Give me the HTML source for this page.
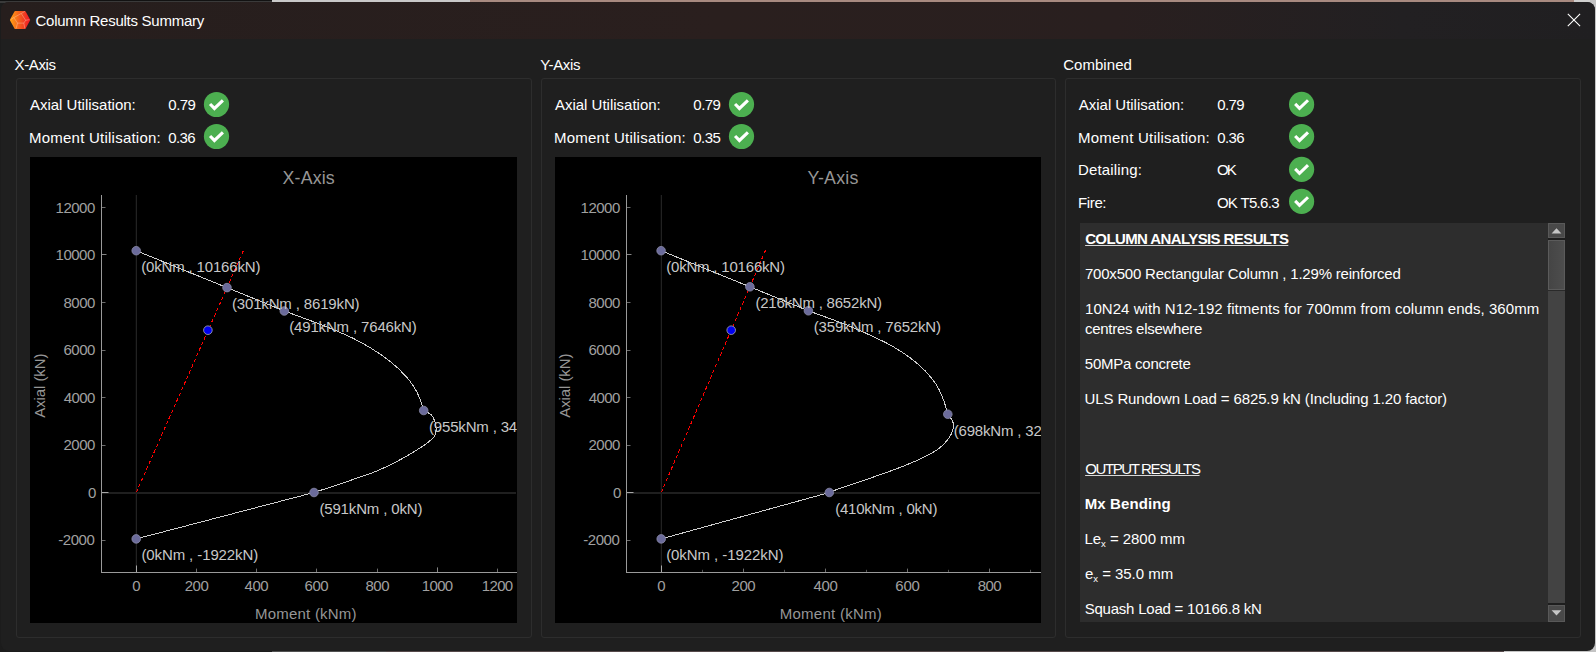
<!DOCTYPE html>
<html lang="en"><head><meta charset="utf-8"><title>Column Results Summary</title>
<style>
html,body{margin:0;padding:0}
body{width:1596px;height:652px;position:relative;overflow:hidden;background:#1c1c1c;font-family:"Liberation Sans", sans-serif;font-size:15px;color:#fff}
.bg{position:absolute}
#win{position:absolute;left:1px;top:2px;width:1594px;height:649px;border-radius:8px;background:#1f1f1f;overflow:hidden}
#tb{position:absolute;left:0;top:0;width:1594px;height:37px;background:linear-gradient(90deg,#261e1d 0%,#2a1f1e 45%,#291f1f 70%,#222022 88%,#201f21 100%)}
.t{position:absolute;white-space:pre;line-height:20px;height:20px}
.gb{position:absolute;border:1px solid #2d2d2d;border-radius:3px;box-sizing:border-box}
.plot{position:absolute;display:block}
.plot text{font-family:"Liberation Sans", sans-serif;font-size:15px}
.tk{fill:#a0a0a0}
.al{fill:#969696}
.plot text.ti{fill:#969696;font-size:17.8px}
.lb{fill:#c8c8c8}
.ck{position:absolute;display:block}
#ta{position:absolute;left:1080px;top:223px;width:485px;height:399px;background:#2d2d2d;overflow:hidden}
.b{font-weight:bold}
.u{text-decoration:underline;text-decoration-thickness:1px;text-underline-offset:1px;text-decoration-color:#d8d8d8}
sub{font-size:9.5px;vertical-align:baseline;position:relative;top:3px;line-height:0}
</style></head><body>

<div class="bg" style="left:0;top:0;width:272px;height:1px;background:#121212"></div>
<div class="bg" style="left:0;top:1px;width:272px;height:2px;background:#3a3a3a"></div>
<div class="bg" style="left:272px;top:0;width:198px;height:3px;background:#c9c9c9"></div>
<div class="bg" style="left:470px;top:0;width:1104px;height:3px;background:#a88a80"></div>
<div class="bg" style="left:1574px;top:0;width:22px;height:12px;background:#cfcfcf"></div>
<div class="bg" style="left:1590px;top:0;width:6px;height:652px;background:#c4c4c4"></div>
<div class="bg" style="left:272px;top:649px;width:114px;height:3px;background:#505050"></div>
<div class="bg" style="left:386px;top:649px;width:1118px;height:3px;background:#55494a"></div>
<div class="bg" style="left:1504px;top:640px;width:92px;height:12px;background:#c4c4c4"></div>
<div id="win"><div id="tb"></div></div>
<svg class="ck" style="left:8px;top:8px" width="24" height="24" viewBox="0 0 24 24">
<defs><linearGradient id="ig" x1="0" y1="0" x2="1" y2="0"><stop offset="0" stop-color="#ff9a14"/><stop offset="0.45" stop-color="#f4601e"/><stop offset="1" stop-color="#ee1c25"/></linearGradient></defs>
<path d="M2.9 12 L7.3 3.85 L16.8 3.85 L21.2 12 L16.8 20.15 L7.3 20.15 Z" fill="url(#ig)" stroke="url(#ig)" stroke-width="1.9" stroke-linejoin="round"/>
<path d="M5.8 9.6 L13.2 5.5 L17.6 12.3 L15.8 15.1 L9.5 15.1 Z M9.5 15.1 L8.2 20.4 M15.8 15.1 L16.8 20.4 M5.8 9.6 L2.6 11.6 M13.2 5.5 L16.9 3.4 M17.6 12.3 L21.4 11.6" fill="none" stroke="#ffe0cc" stroke-opacity="0.5" stroke-width="0.7"/>
</svg>
<svg class="ck" style="left:1567px;top:13px" width="14" height="14" viewBox="0 0 14 14"><path d="M0.8 0.9 L13.1 13.2 M13.1 0.9 L0.8 13.2" stroke="#fff" stroke-width="1.1" fill="none"/></svg>
<div class="gb" style="left:16px;top:78px;width:516px;height:560px"></div>
<div class="gb" style="left:541px;top:78px;width:515px;height:560px"></div>
<div class="gb" style="left:1065px;top:78px;width:516px;height:560px"></div>
<span class="t " style="left:35.52px;top:11.0px;letter-spacing:-0.264px">Column Results Summary</span>
<span class="t " style="left:14.59px;top:55.0px;letter-spacing:-0.397px">X-Axis</span>
<span class="t " style="left:540.14px;top:55.0px;letter-spacing:-0.306px">Y-Axis</span>
<span class="t " style="left:1063.14px;top:55.0px;letter-spacing:0.054px">Combined</span>
<span class="t " style="left:29.91px;top:95.0px;letter-spacing:-0.001px">Axial Utilisation:</span>
<span class="t " style="left:29.00px;top:128.0px;letter-spacing:0.233px">Moment Utilisation:</span>
<span class="t " style="left:554.91px;top:95.0px;letter-spacing:-0.001px">Axial Utilisation:</span>
<span class="t " style="left:554.00px;top:128.0px;letter-spacing:0.233px">Moment Utilisation:</span>
<span class="t " style="left:168.36px;top:95.0px;letter-spacing:-0.549px">0.79</span>
<span class="t " style="left:168.36px;top:128.0px;letter-spacing:-0.633px">0.36</span>
<span class="t " style="left:693.36px;top:95.0px;letter-spacing:-0.549px">0.79</span>
<span class="t " style="left:693.36px;top:128.0px;letter-spacing:-0.591px">0.35</span>
<svg class="ck" style="left:202px;top:90px" width="28" height="28" viewBox="0 0 28 28"><circle cx="14.50" cy="14.50" r="12.6" fill="#4caf50"/><path d="M8.05 14.00 L12.40 18.45 L20.90 10.35" fill="none" stroke="#fff" stroke-width="3.1"/></svg>
<svg class="ck" style="left:202px;top:122px" width="28" height="28" viewBox="0 0 28 28"><circle cx="14.50" cy="14.50" r="12.6" fill="#4caf50"/><path d="M8.05 14.00 L12.40 18.45 L20.90 10.35" fill="none" stroke="#fff" stroke-width="3.1"/></svg>
<svg class="ck" style="left:727px;top:90px" width="28" height="28" viewBox="0 0 28 28"><circle cx="14.50" cy="14.50" r="12.6" fill="#4caf50"/><path d="M8.05 14.00 L12.40 18.45 L20.90 10.35" fill="none" stroke="#fff" stroke-width="3.1"/></svg>
<svg class="ck" style="left:727px;top:122px" width="28" height="28" viewBox="0 0 28 28"><circle cx="14.50" cy="14.50" r="12.6" fill="#4caf50"/><path d="M8.05 14.00 L12.40 18.45 L20.90 10.35" fill="none" stroke="#fff" stroke-width="3.1"/></svg>
<span class="t " style="left:1078.83px;top:95.0px;letter-spacing:-0.026px">Axial Utilisation:</span>
<span class="t " style="left:1217.18px;top:95.0px;letter-spacing:-0.563px">0.79</span>
<svg class="ck" style="left:1287px;top:90px" width="28" height="28" viewBox="0 0 28 28"><circle cx="14.60" cy="14.40" r="12.6" fill="#4caf50"/><path d="M8.15 13.90 L12.50 18.35 L21.00 10.25" fill="none" stroke="#fff" stroke-width="3.1"/></svg>
<span class="t " style="left:1078.02px;top:128.0px;letter-spacing:0.229px">Moment Utilisation:</span>
<span class="t " style="left:1217.18px;top:128.0px;letter-spacing:-0.563px">0.36</span>
<svg class="ck" style="left:1287px;top:122px" width="28" height="28" viewBox="0 0 28 28"><circle cx="14.60" cy="14.50" r="12.6" fill="#4caf50"/><path d="M8.15 14.00 L12.50 18.45 L21.00 10.35" fill="none" stroke="#fff" stroke-width="3.1"/></svg>
<span class="t " style="left:1078.02px;top:160.0px;letter-spacing:0.159px">Detailing:</span>
<span class="t " style="left:1216.89px;top:160.0px;letter-spacing:-1.699px">OK</span>
<svg class="ck" style="left:1287px;top:155px" width="28" height="28" viewBox="0 0 28 28"><circle cx="14.60" cy="14.30" r="12.6" fill="#4caf50"/><path d="M8.15 13.80 L12.50 18.25 L21.00 10.15" fill="none" stroke="#fff" stroke-width="3.1"/></svg>
<span class="t " style="left:1078.02px;top:193.0px;letter-spacing:-0.373px">Fire:</span>
<span class="t " style="left:1216.89px;top:193.0px;letter-spacing:-0.676px">OK T5.6.3</span>
<svg class="ck" style="left:1287px;top:187px" width="28" height="28" viewBox="0 0 28 28"><circle cx="14.60" cy="14.40" r="12.6" fill="#4caf50"/><path d="M8.15 13.90 L12.50 18.35 L21.00 10.25" fill="none" stroke="#fff" stroke-width="3.1"/></svg>
<svg class="plot" style="left:30px;top:157px" width="487" height="466" viewBox="0 0 487 466">
<rect width="487" height="466" fill="#000"/>
<text class="tk" x="28.16" y="388.3" style="letter-spacing:-0.427px">-2000</text>
<text class="tk" x="57.97" y="340.8" style="letter-spacing:0.000px">0</text>
<text class="tk" x="33.53" y="293.3" style="letter-spacing:-0.490px">2000</text>
<text class="tk" x="33.81" y="245.8" style="letter-spacing:-0.583px">4000</text>
<text class="tk" x="33.53" y="198.3" style="letter-spacing:-0.490px">6000</text>
<text class="tk" x="33.53" y="150.8" style="letter-spacing:-0.490px">8000</text>
<text class="tk" x="25.62" y="103.3" style="letter-spacing:-0.517px">10000</text>
<text class="tk" x="25.62" y="55.8" style="letter-spacing:-0.517px">12000</text>
<text class="tk" x="102.25" y="433.6" style="letter-spacing:0.000px">0</text>
<text class="tk" x="154.64" y="433.6" style="letter-spacing:-0.416px">200</text>
<text class="tk" x="214.54" y="433.6" style="letter-spacing:-0.447px">400</text>
<text class="tk" x="274.59" y="433.6" style="letter-spacing:-0.478px">600</text>
<text class="tk" x="335.43" y="433.6" style="letter-spacing:-0.400px">800</text>
<text class="tk" x="391.81" y="433.6" style="letter-spacing:-0.654px">1000</text>
<text class="tk" x="451.80" y="433.6" style="letter-spacing:-0.675px">1200</text>
<text class="ti" x="252.58" y="26.9" style="letter-spacing:0.140px">X-Axis</text>
<text class="al" x="225.01" y="461.6" style="letter-spacing:0.218px">Moment (kNm)</text>
<text class="al" transform="translate(15.3 228.7) rotate(-90)" text-anchor="middle" style="letter-spacing:-0.08px">Axial (kN)</text>
<rect x="105.8" y="38.0" width="1" height="377.0" fill="#2b2b2b"/>
<rect x="72.0" y="335.0" width="414.0" height="2" fill="#1f1f1f"/>
<rect x="71.0" y="38.0" width="1" height="378.0" fill="#9a9a9a"/>
<rect x="71.0" y="415.0" width="416.0" height="1" fill="#9a9a9a"/>
<rect x="72.0" y="383.0" width="3.5" height="1" fill="#6c6c6c"/>
<rect x="72.0" y="335.0" width="6.5" height="1" fill="#a8a8a8"/>
<rect x="72.0" y="288.0" width="3.5" height="1" fill="#6c6c6c"/>
<rect x="72.0" y="240.0" width="3.5" height="1" fill="#6c6c6c"/>
<rect x="72.0" y="193.0" width="3.5" height="1" fill="#6c6c6c"/>
<rect x="72.0" y="145.0" width="3.5" height="1" fill="#6c6c6c"/>
<rect x="72.0" y="97.0" width="4.5" height="1" fill="#858585"/>
<rect x="72.0" y="50.0" width="3.5" height="1" fill="#6c6c6c"/>
<rect x="106.0" y="408.5" width="1" height="6.5" fill="#a8a8a8"/>
<rect x="166.0" y="411.6" width="1" height="3.4" fill="#6c6c6c"/>
<rect x="226.0" y="411.6" width="1" height="3.4" fill="#6c6c6c"/>
<rect x="286.0" y="411.6" width="1" height="3.4" fill="#6c6c6c"/>
<rect x="347.0" y="411.6" width="1" height="3.4" fill="#6c6c6c"/>
<rect x="407.0" y="410.4" width="1" height="4.6" fill="#858585"/>
<rect x="467.0" y="411.6" width="1" height="3.4" fill="#6c6c6c"/>
<line x1="106.3" y1="335.4" x2="213.7" y2="93.0" stroke="#f00" stroke-width="1" stroke-dasharray="3.6 2.6" shape-rendering="crispEdges"/>
<path d="M106.2 93.7 L197.0 130.6 L254.3 154.0 L254.3 154.0 C259.7 156.0 278.3 162.8 286.8 166.0 C295.3 169.2 299.1 170.8 305.2 173.4 C311.3 176.0 317.5 178.5 323.6 181.6 C329.7 184.7 335.9 188.0 342.0 191.8 C348.1 195.6 354.9 200.2 360.4 204.6 C365.9 209.0 371.1 214.1 375.1 218.4 C379.1 222.7 381.9 226.6 384.3 230.4 C386.8 234.2 388.2 237.5 389.8 241.4 C391.4 245.2 393.1 251.5 393.7 253.5 L393.7 253.5 C395.0 254.3 399.7 256.2 401.6 258.2 C403.5 260.2 404.4 263.1 405.2 265.6 C405.9 268.1 406.2 270.7 406.1 273.0 C406.0 275.3 405.8 277.2 404.3 279.4 C402.8 281.6 401.0 283.3 397.0 286.2 C393.0 289.1 386.2 293.4 380.4 296.9 C374.6 300.4 368.1 303.9 362.0 307.0 C355.9 310.1 349.7 312.9 343.6 315.3 C337.5 317.8 331.3 319.6 325.2 321.7 C319.1 323.8 312.9 326.1 306.8 328.2 C300.7 330.2 292.2 332.8 288.4 334.0 C284.6 335.2 284.7 335.2 284.0 335.5 L106.2 381.9" fill="none" stroke="#cfcfcf" stroke-width="1" shape-rendering="crispEdges"/>
<circle cx="106.2" cy="93.7" r="4.3" fill="#6b6b9b" stroke="#8c8ca8" stroke-width="0.8"/>
<circle cx="197.0" cy="130.6" r="4.3" fill="#6b6b9b" stroke="#8c8ca8" stroke-width="0.8"/>
<circle cx="254.3" cy="154.0" r="4.3" fill="#6b6b9b" stroke="#8c8ca8" stroke-width="0.8"/>
<circle cx="393.7" cy="253.5" r="4.3" fill="#6b6b9b" stroke="#8c8ca8" stroke-width="0.8"/>
<circle cx="284.0" cy="335.5" r="4.3" fill="#6b6b9b" stroke="#8c8ca8" stroke-width="0.8"/>
<circle cx="106.2" cy="381.9" r="4.3" fill="#6b6b9b" stroke="#8c8ca8" stroke-width="0.8"/>
<circle cx="177.9" cy="173.2" r="4.3" fill="#0000f0" stroke="#9a9aa8" stroke-width="0.9"/>
<text class="lb" x="111.20" y="115.1" style="letter-spacing:-0.163px">(0kNm , 10166kN)</text>
<text class="lb" x="201.90" y="152.0" style="letter-spacing:-0.146px">(301kNm , 8619kN)</text>
<text class="lb" x="259.19" y="175.3" style="letter-spacing:-0.154px">(491kNm , 7646kN)</text>
<text class="lb" x="399.00" y="274.8" style="letter-spacing:-0.170px">(955kNm , 3436kN)</text>
<text class="lb" x="289.39" y="357.0" style="letter-spacing:-0.152px">(591kNm , 0kN)</text>
<text class="lb" x="111.39" y="403.0" style="letter-spacing:-0.100px">(0kNm , -1922kN)</text>
</svg>
<svg class="plot" style="left:555px;top:157px" width="486" height="466" viewBox="0 0 486 466">
<rect width="486" height="466" fill="#000"/>
<text class="tk" x="28.16" y="388.3" style="letter-spacing:-0.427px">-2000</text>
<text class="tk" x="57.98" y="340.8" style="letter-spacing:0.000px">0</text>
<text class="tk" x="33.53" y="293.3" style="letter-spacing:-0.490px">2000</text>
<text class="tk" x="33.81" y="245.8" style="letter-spacing:-0.583px">4000</text>
<text class="tk" x="33.53" y="198.3" style="letter-spacing:-0.490px">6000</text>
<text class="tk" x="33.53" y="150.8" style="letter-spacing:-0.490px">8000</text>
<text class="tk" x="25.62" y="103.3" style="letter-spacing:-0.517px">10000</text>
<text class="tk" x="25.62" y="55.8" style="letter-spacing:-0.517px">12000</text>
<text class="tk" x="102.25" y="433.6" style="letter-spacing:0.000px">0</text>
<text class="tk" x="176.47" y="433.6" style="letter-spacing:-0.400px">200</text>
<text class="tk" x="258.54" y="433.6" style="letter-spacing:-0.400px">400</text>
<text class="tk" x="340.27" y="433.6" style="letter-spacing:-0.228px">600</text>
<text class="tk" x="422.65" y="433.6" style="letter-spacing:-0.494px">800</text>
<text class="ti" x="252.45" y="26.9" style="letter-spacing:0.257px">Y-Axis</text>
<text class="al" x="224.65" y="461.6" style="letter-spacing:0.269px">Moment (kNm)</text>
<text class="al" transform="translate(15.3 228.7) rotate(-90)" text-anchor="middle" style="letter-spacing:-0.08px">Axial (kN)</text>
<rect x="105.8" y="38.0" width="1" height="377.0" fill="#2b2b2b"/>
<rect x="72.0" y="335.0" width="413.0" height="2" fill="#1f1f1f"/>
<rect x="71.0" y="38.0" width="1" height="378.0" fill="#9a9a9a"/>
<rect x="71.0" y="415.0" width="415.0" height="1" fill="#9a9a9a"/>
<rect x="72.0" y="383.0" width="3.5" height="1" fill="#6c6c6c"/>
<rect x="72.0" y="335.0" width="6.5" height="1" fill="#a8a8a8"/>
<rect x="72.0" y="288.0" width="3.5" height="1" fill="#6c6c6c"/>
<rect x="72.0" y="240.0" width="3.5" height="1" fill="#6c6c6c"/>
<rect x="72.0" y="193.0" width="3.5" height="1" fill="#6c6c6c"/>
<rect x="72.0" y="145.0" width="3.5" height="1" fill="#6c6c6c"/>
<rect x="72.0" y="97.0" width="4.5" height="1" fill="#858585"/>
<rect x="72.0" y="50.0" width="3.5" height="1" fill="#6c6c6c"/>
<rect x="106.0" y="408.5" width="1" height="6.5" fill="#a8a8a8"/>
<rect x="188.0" y="411.6" width="1" height="3.4" fill="#6c6c6c"/>
<rect x="270.0" y="411.6" width="1" height="3.4" fill="#6c6c6c"/>
<rect x="352.0" y="411.6" width="1" height="3.4" fill="#6c6c6c"/>
<rect x="434.0" y="411.6" width="1" height="3.4" fill="#6c6c6c"/>
<rect x="147.0" y="412.8" width="1" height="2.2" fill="#505050"/>
<rect x="229.0" y="412.8" width="1" height="2.2" fill="#505050"/>
<rect x="311.0" y="412.8" width="1" height="2.2" fill="#505050"/>
<rect x="393.0" y="412.8" width="1" height="2.2" fill="#505050"/>
<rect x="475.0" y="412.8" width="1" height="2.2" fill="#505050"/>
<line x1="106.3" y1="335.4" x2="210.7" y2="93.0" stroke="#f00" stroke-width="1" stroke-dasharray="3.6 2.6" shape-rendering="crispEdges"/>
<path d="M106.1 93.7 L194.9 129.8 L253.4 153.8 L253.4 153.8 C258.1 155.5 274.0 161.2 281.8 164.2 C289.6 167.1 294.1 168.9 300.2 171.5 C306.3 174.1 312.5 176.9 318.6 179.8 C324.7 182.7 330.9 185.5 337.0 189.0 C343.1 192.5 349.9 196.9 355.4 201.0 C360.9 205.1 365.8 209.4 370.1 213.8 C374.4 218.2 378.3 223.2 381.2 227.6 C384.1 232.1 385.9 236.5 387.6 240.5 C389.3 244.5 390.4 248.8 391.3 251.6 C392.2 254.4 392.5 256.3 392.8 257.2 L392.8 257.2 C393.6 258.3 396.6 261.6 397.5 263.8 C398.4 266.0 398.6 267.9 398.4 270.2 C398.1 272.5 397.4 275.0 396.0 277.6 C394.6 280.2 392.6 283.1 390.1 285.8 C387.6 288.5 384.9 291.0 380.9 293.6 C376.9 296.2 371.7 298.9 366.2 301.5 C360.7 304.1 353.9 306.9 347.8 309.4 C341.7 311.8 335.5 314.0 329.4 316.2 C323.3 318.4 317.1 320.5 311.0 322.6 C304.9 324.7 297.8 326.9 292.6 328.7 C287.4 330.5 282.8 332.2 279.7 333.3 C276.7 334.4 275.2 335.1 274.3 335.5 L106.2 381.9" fill="none" stroke="#cfcfcf" stroke-width="1" shape-rendering="crispEdges"/>
<circle cx="106.1" cy="93.7" r="4.3" fill="#6b6b9b" stroke="#8c8ca8" stroke-width="0.8"/>
<circle cx="194.9" cy="129.8" r="4.3" fill="#6b6b9b" stroke="#8c8ca8" stroke-width="0.8"/>
<circle cx="253.4" cy="153.8" r="4.3" fill="#6b6b9b" stroke="#8c8ca8" stroke-width="0.8"/>
<circle cx="392.8" cy="257.2" r="4.3" fill="#6b6b9b" stroke="#8c8ca8" stroke-width="0.8"/>
<circle cx="274.3" cy="335.5" r="4.3" fill="#6b6b9b" stroke="#8c8ca8" stroke-width="0.8"/>
<circle cx="106.2" cy="381.9" r="4.3" fill="#6b6b9b" stroke="#8c8ca8" stroke-width="0.8"/>
<circle cx="176.2" cy="173.2" r="4.3" fill="#0000f0" stroke="#9a9aa8" stroke-width="0.9"/>
<text class="lb" x="111.19" y="115.1" style="letter-spacing:-0.195px">(0kNm , 10166kN)</text>
<text class="lb" x="200.39" y="151.3" style="letter-spacing:-0.212px">(216kNm , 8652kN)</text>
<text class="lb" x="258.77" y="175.3" style="letter-spacing:-0.181px">(359kNm , 7652kN)</text>
<text class="lb" x="398.65" y="278.8" style="letter-spacing:-0.170px">(698kNm , 3288kN)</text>
<text class="lb" x="280.13" y="357.0" style="letter-spacing:-0.205px">(410kNm , 0kN)</text>
<text class="lb" x="111.19" y="403.0" style="letter-spacing:-0.076px">(0kNm , -1922kN)</text>
</svg>
<div id="ta"><span class="t b u" style="left:5.14px;top:6.0px;letter-spacing:-0.600px">COLUMN ANALYSIS RESULTS</span>
<span class="t " style="left:4.92px;top:41.0px;letter-spacing:-0.194px">700x500 Rectangular Column , 1.29% reinforced</span>
<span class="t " style="left:5.05px;top:76.0px;letter-spacing:0.052px">10N24 with N12-192 fitments for 700mm from column ends, 360mm</span>
<span class="t " style="left:5.00px;top:96.0px;letter-spacing:-0.280px">centres elsewhere</span>
<span class="t " style="left:4.79px;top:131.0px;letter-spacing:-0.241px">50MPa concrete</span>
<span class="t " style="left:4.59px;top:166.0px;letter-spacing:-0.128px">ULS Rundown Load = 6825.9 kN (Including 1.20 factor)</span>
<span class="t u" style="left:5.14px;top:236.0px;letter-spacing:-1.372px">OUTPUT RESULTS</span>
<span class="t b" style="left:4.63px;top:271.0px;letter-spacing:0.115px">Mx Bending</span>
<span class="t " style="left:4.50px;top:306.0px;letter-spacing:-0.047px">Le<sub>x</sub> = 2800 mm</span>
<span class="t " style="left:5.00px;top:341.0px;letter-spacing:-0.039px">e<sub>x</sub> = 35.0 mm</span>
<span class="t " style="left:4.63px;top:376.0px;letter-spacing:-0.218px">Squash Load = 10166.8 kN</span>
<div style="position:absolute;left:468px;top:0;width:17px;height:399px;background:#434343"></div>
<div style="position:absolute;left:468px;top:0;width:17px;height:15px;background:#494949;box-sizing:border-box;border:1px solid #595959"></div>
<div style="position:absolute;left:468px;top:15px;width:17px;height:2px;background:#1e1e1e"></div>
<div style="position:absolute;left:468px;top:17px;width:17px;height:50px;background:linear-gradient(90deg,#454545,#4d4d4d);box-sizing:border-box;border:1px solid #5b5b5b"></div>
<div style="position:absolute;left:468px;top:67px;width:17px;height:1px;background:#2a2a2a"></div>
<div style="position:absolute;left:468px;top:380px;width:17px;height:2px;background:#1e1e1e"></div>
<div style="position:absolute;left:468px;top:382px;width:17px;height:17px;background:#494949;box-sizing:border-box;border:1px solid #595959"></div>
<svg style="position:absolute;left:468px;top:0" width="17" height="399" viewBox="0 0 17 399"><path d="M3.6 10.4 L13.4 10.4 L8.5 5.2 Z M3.6 387.2 L13.4 387.2 L8.5 392.4 Z" fill="#c6c6c6"/></svg></div>
</body></html>
